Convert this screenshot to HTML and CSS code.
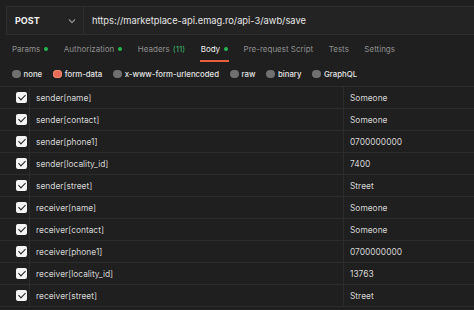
FILE: index.html
```html
<!DOCTYPE html>
<html>
<head>
<meta charset="utf-8">
<link rel="stylesheet" href="styles.css">
</head>
<body>
<div class="app">
  <div class="urlbar">
    <div class="method">
      <span class="method-name">POST</span>
      <svg class="chev" width="8" height="6" viewBox="0 0 8 6"><path d="M1 1.5 L4 4.5 L7 1.5" fill="none" stroke="#8a8a8a" stroke-width="1.3"/></svg>
    </div>
    <div class="url">https://marketplace-api.emag.ro/api-3/awb/save</div>
  </div>
  <div class="tabs">
    <span class="tab">Params<i class="dot"></i></span>
    <span class="tab">Authorization<i class="dot"></i></span>
    <span class="tab">Headers <em class="count">(11)</em></span>
    <span class="tab active">Body<i class="dot"></i></span>
    <span class="tab">Pre-request Script</span>
    <span class="tab">Tests</span>
    <span class="tab">Settings</span>
  </div>
  <div class="radios">
    <span class="radio"><i class="circle"></i>none</span>
    <span class="radio"><i class="circle on"></i>form-data</span>
    <span class="radio"><i class="circle"></i>x-www-form-urlencoded</span>
    <span class="radio"><i class="circle"></i>raw</span>
    <span class="radio"><i class="circle"></i>binary</span>
    <span class="radio"><i class="circle"></i>GraphQL</span>
  </div>
  <div class="table">
    <div class="row"><div class="c-check"><span class="cb"></span></div><div class="c-key">sender[name]</div><div class="c-val">Someone</div></div>
    <div class="row"><div class="c-check"><span class="cb"></span></div><div class="c-key">sender[contact]</div><div class="c-val">Someone</div></div>
    <div class="row"><div class="c-check"><span class="cb"></span></div><div class="c-key">sender[phone1]</div><div class="c-val">0700000000</div></div>
    <div class="row"><div class="c-check"><span class="cb"></span></div><div class="c-key">sender[locality_id]</div><div class="c-val">7400</div></div>
    <div class="row"><div class="c-check"><span class="cb"></span></div><div class="c-key">sender[street]</div><div class="c-val">Street</div></div>
    <div class="row"><div class="c-check"><span class="cb"></span></div><div class="c-key">receiver[name]</div><div class="c-val">Someone</div></div>
    <div class="row"><div class="c-check"><span class="cb"></span></div><div class="c-key">receiver[contact]</div><div class="c-val">Someone</div></div>
    <div class="row"><div class="c-check"><span class="cb"></span></div><div class="c-key">receiver[phone1]</div><div class="c-val">0700000000</div></div>
    <div class="row"><div class="c-check"><span class="cb"></span></div><div class="c-key">receiver[locality_id]</div><div class="c-val">13763</div></div>
    <div class="row"><div class="c-check"><span class="cb"></span></div><div class="c-key">receiver[street]</div><div class="c-val">Street</div></div>
  </div>
</div>
</body>
</html>
```
FILE: styles.css
```css
html, body {
  margin: 0;
  padding: 0;
  background: #1f1f1f;
}
.app {
  width: 474px;
  height: 310px;
  overflow: hidden;
  font-family: Inter, "Liberation Sans", sans-serif;
  font-size: 8.4px;
  color: #d6d6d6;
  background: #1f1f1f;
}
.urlbar {
  display: flex;
  margin: 6px 0 0 6px;
  height: 27px;
  background: #232323;
  border: 1px solid #2e2e2e;
  border-right: none;
}
.method {
  width: 77px;
  display: flex;
  align-items: center;
  justify-content: space-between;
  padding: 0 7px 0 8px;
  box-sizing: border-box;
  border-right: 1px solid #2e2e2e;
}
.method-name {
  font-weight: 700;
  color: #f0f0f0;
  font-size: 9px;
}
.url {
  display: flex;
  align-items: center;
  padding-left: 8px;
  color: #e6e6e6;
  font-size: 9.3px;
}
.tabs {
  display: flex;
  height: 28px;
  align-items: center;
  padding-left: 12px;
  font-size: 8px;
}
.tab {
  position: relative;
  color: #8e8e8e;
  margin-right: 15.5px;
  display: flex;
  align-items: center;
  height: 28px;
  white-space: nowrap;
}
.tab.active {
  color: #f2f2f2;
}
.tab.active::after {
  content: "";
  position: absolute;
  left: -1px;
  right: -1px;
  bottom: 1px;
  height: 2px;
  background: #e5613d;
}
.dot {
  display: inline-block;
  width: 4px;
  height: 4px;
  border-radius: 50%;
  background: #26b553;
  margin-left: 4px;
}
.count {
  font-style: normal;
  color: #3bb46b;
  margin-left: 3px;
}
.radios {
  display: flex;
  align-items: center;
  height: 22px;
  padding-left: 12px;
  font-size: 7.8px;
}
.radio {
  display: flex;
  align-items: center;
  color: #e4e4e4;
  margin-right: 11px;
  white-space: nowrap;
  font-weight: 500;
}
.circle {
  display: inline-block;
  width: 8.5px;
  height: 8.5px;
  border-radius: 50%;
  background: #707070;
  margin-right: 3px;
}
.circle.on {
  background: #e66a55;
  box-shadow: inset 0 0 0 1px #f08b78;
}
.table {
  margin-top: 1px;
  border-top: 1px solid #2c2c2c;
}
.row {
  display: flex;
  height: 21px;
  border-bottom: 1px solid #2c2c2c;
}
.c-check {
  width: 30px;
  flex: none;
  display: flex;
  align-items: center;
  justify-content: flex-end;
  padding-right: 2px;
  box-sizing: border-box;
  border-right: 1px solid #2c2c2c;
}
.cb {
  width: 11px;
  height: 11px;
  border-radius: 2px;
  background: #f4f4f4;
  position: relative;
}
.cb::after {
  content: "";
  position: absolute;
  left: 3.5px;
  top: 1.2px;
  width: 3px;
  height: 6px;
  border: solid #1f1f1f;
  border-width: 0 1.6px 1.6px 0;
  transform: rotate(45deg);
}
.c-key {
  width: 314px;
  flex: none;
  display: flex;
  align-items: center;
  padding-left: 6px;
  box-sizing: border-box;
  border-right: 1px solid #2c2c2c;
  color: #d4d4d4;
}
.c-val {
  flex: 1;
  display: flex;
  align-items: center;
  padding-left: 6px;
  color: #d4d4d4;
}
```
